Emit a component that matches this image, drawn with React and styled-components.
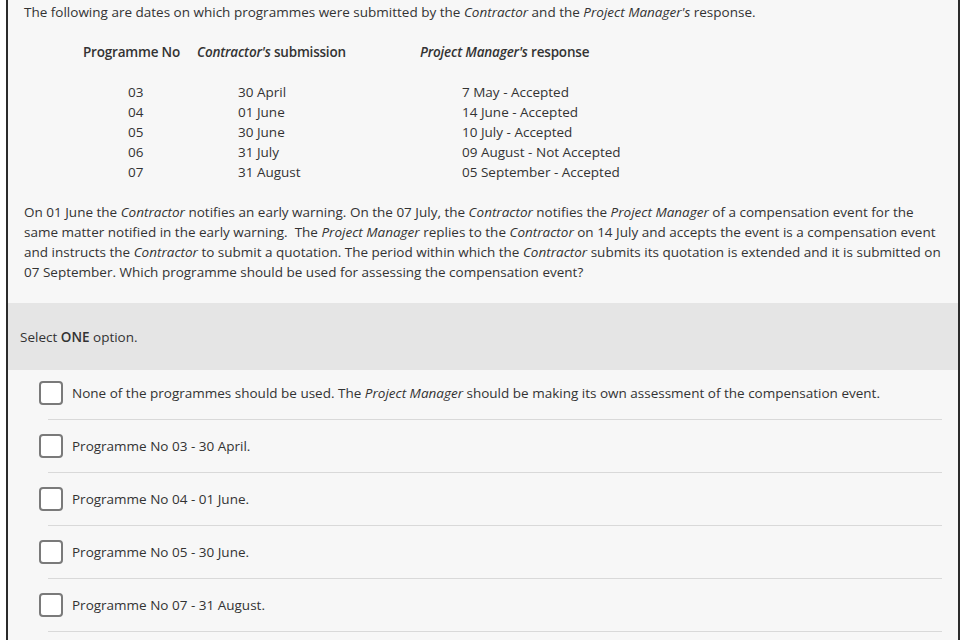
import React from 'react';
import styled, { createGlobalStyle } from 'styled-components';

const GlobalStyle = createGlobalStyle`
	body {
		margin: 0;
		background: #ffffff;
		font-family: 'Open Sans', 'Noto Sans', sans-serif;
		color: #333333;
	}
`;

const Frame = styled.div`
	margin-left: 6px;
	width: 950px;
	min-height: 640px;
	background: #f7f7f7;
	border-left: 2px solid #2b2b2b;
	border-right: 2px solid #2b2b2b;
	font-size: 13.5px;
	line-height: 20px;
`;

const Intro = styled.p`
	margin: 0;
	padding: 2px 16px 0;
`;

const Schedule = styled.div`
	display: grid;
	grid-template-columns: 114px 223px 1fr;
	margin: 20px 0 0 75px;
`;

const HeadCell = styled.div`
	font-weight: 600;
	letter-spacing: -0.2px;
	margin-bottom: 20px;
`;

const Cell = styled.div`
	padding-left: ${(p) => p.$indent}px;
`;

const Question = styled.p`
	margin: 20px 0 0;
	padding: 0 16px 21px;
`;

const Band = styled.div`
	background: #e5e5e5;
	height: 67px;
	display: flex;
	align-items: center;
	padding-left: 12px;

	strong {
		font-weight: 600;
	}
`;

const Options = styled.ul`
	list-style: none;
	margin: 0;
	padding: 0 16px 0 40px;
`;

const Option = styled.li`
	display: flex;
	align-items: center;
	gap: 9px;
	padding: 14px 0;
	border-bottom: 1px solid #d9d9d9;

	&:first-child {
		padding-top: 11px;
	}
`;

const Box = styled.span`
	flex: none;
	box-sizing: border-box;
	width: 24px;
	height: 24px;
	margin-left: -9px;
	border: 2px solid #7a7a7a;
	border-radius: 4px;
	background: #ffffff;
`;

const rows = [
	['03', '30 April', '7 May - Accepted'],
	['04', '01 June', '14 June - Accepted'],
	['05', '30 June', '10 July - Accepted'],
	['06', '31 July', '09 August - Not Accepted'],
	['07', '31 August', '05 September - Accepted'],
];

const answers = [
	<>None of the programmes should be used. The <em>Project Manager</em> should be making its own assessment of the compensation event.</>,
	'Programme No 03 - 30 April.',
	'Programme No 04 - 01 June.',
	'Programme No 05 - 30 June.',
	'Programme No 07 - 31 August.',
];

export default function App() {
	return (
		<>
			<GlobalStyle />
			<Frame>
				<Intro>
					The following are dates on which programmes were submitted by the <em>Contractor</em> and the{' '}
					<em>Project Manager's</em> response.
				</Intro>
				<Schedule>
					<HeadCell>Programme No</HeadCell>
					<HeadCell>
						<em>Contractor's</em> submission
					</HeadCell>
					<HeadCell>
						<em>Project Manager's</em> response
					</HeadCell>
					{rows.map((r) => (
						<React.Fragment key={r[0]}>
							<Cell $indent={45}>{r[0]}</Cell>
							<Cell $indent={41}>{r[1]}</Cell>
							<Cell $indent={42}>{r[2]}</Cell>
						</React.Fragment>
					))}
				</Schedule>
				<Question>
					On 01 June the <em>Contractor</em> notifies an early warning. On the 07 July, the <em>Contractor</em> notifies
					the <em>Project Manager</em> of a compensation event for the same matter notified in the early warning.&nbsp; The{' '}
					<em>Project Manager</em> replies to the <em>Contractor</em> on 14 July and accepts the event is a compensation
					event and instructs the <em>Contractor</em> to submit a quotation. The period within which the{' '}
					<em>Contractor</em> submits its quotation is extended and it is submitted on 07 September. Which programme
					should be used for assessing the compensation event?
				</Question>
				<Band>
					<span>
						Select <strong>ONE</strong> option.
					</span>
				</Band>
				<Options>
					{answers.map((a, i) => (
						<Option key={i}>
							<Box />
							<span>{a}</span>
						</Option>
					))}
				</Options>
			</Frame>
		</>
	);
}
